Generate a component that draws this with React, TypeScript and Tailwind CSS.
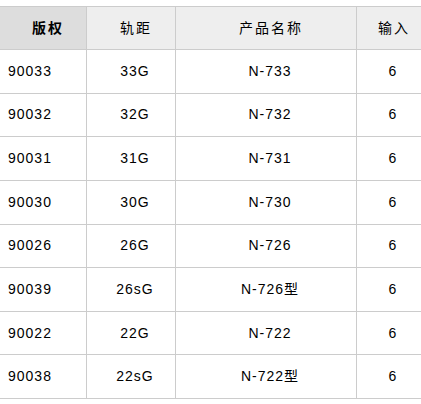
const rows = [
  { id: "90033", gauge: "33G", name: "N-733", input: "6" },
  { id: "90032", gauge: "32G", name: "N-732", input: "6" },
  { id: "90031", gauge: "31G", name: "N-731", input: "6" },
  { id: "90030", gauge: "30G", name: "N-730", input: "6" },
  { id: "90026", gauge: "26G", name: "N-726", input: "6" },
  { id: "90039", gauge: "26sG", name: "N-726型", input: "6" },
  { id: "90022", gauge: "22G", name: "N-722", input: "6" },
  { id: "90038", gauge: "22sG", name: "N-722型", input: "6" },
];

const font = "font-['Liberation_Sans','Noto_Sans_CJK_SC',sans-serif]";

export default function App() {
  return (
    <div className={`w-[421px] overflow-hidden bg-white pt-[6px] text-[14px] tracking-[1px] text-black ${font}`}>
      <div className="w-[440px] border-t border-[#cccccc]">
        <div className="flex h-[43px] border-b border-[#cccccc] tracking-[2px]">
          <div className="flex w-[87px] shrink-0 items-center justify-center border-r border-[#cccccc] bg-[#dddddd] pl-2.5 font-bold">
            版权
          </div>
          <div className="flex w-[89px] shrink-0 items-center justify-center border-r border-[#cccccc] bg-[#eeeeee] pl-2.5">
            轨距
          </div>
          <div className="flex w-[181px] shrink-0 items-center justify-center border-r border-[#cccccc] bg-[#eeeeee] pl-2.5">
            产品名称
          </div>
          <div className="flex w-[64px] shrink-0 items-center justify-center bg-[#eeeeee] pl-2.5">
            输入
          </div>
          <div className="flex-1 bg-[#eeeeee]" />
        </div>
        {rows.map((r) => (
          <div key={r.id} className="flex h-[43.625px] border-b border-[#cccccc]">
            <div className="flex w-[87px] shrink-0 items-center border-r border-[#cccccc] pl-2">{r.id}</div>
            <div className="flex w-[89px] shrink-0 items-center justify-center border-r border-[#cccccc] pl-2">
              {r.gauge}
            </div>
            <div className="flex w-[181px] shrink-0 items-center justify-center border-r border-[#cccccc] pl-2">
              {r.name}
            </div>
            <div className="flex w-[64px] shrink-0 items-center justify-center pl-2">{r.input}</div>
          </div>
        ))}
      </div>
    </div>
  );
}
